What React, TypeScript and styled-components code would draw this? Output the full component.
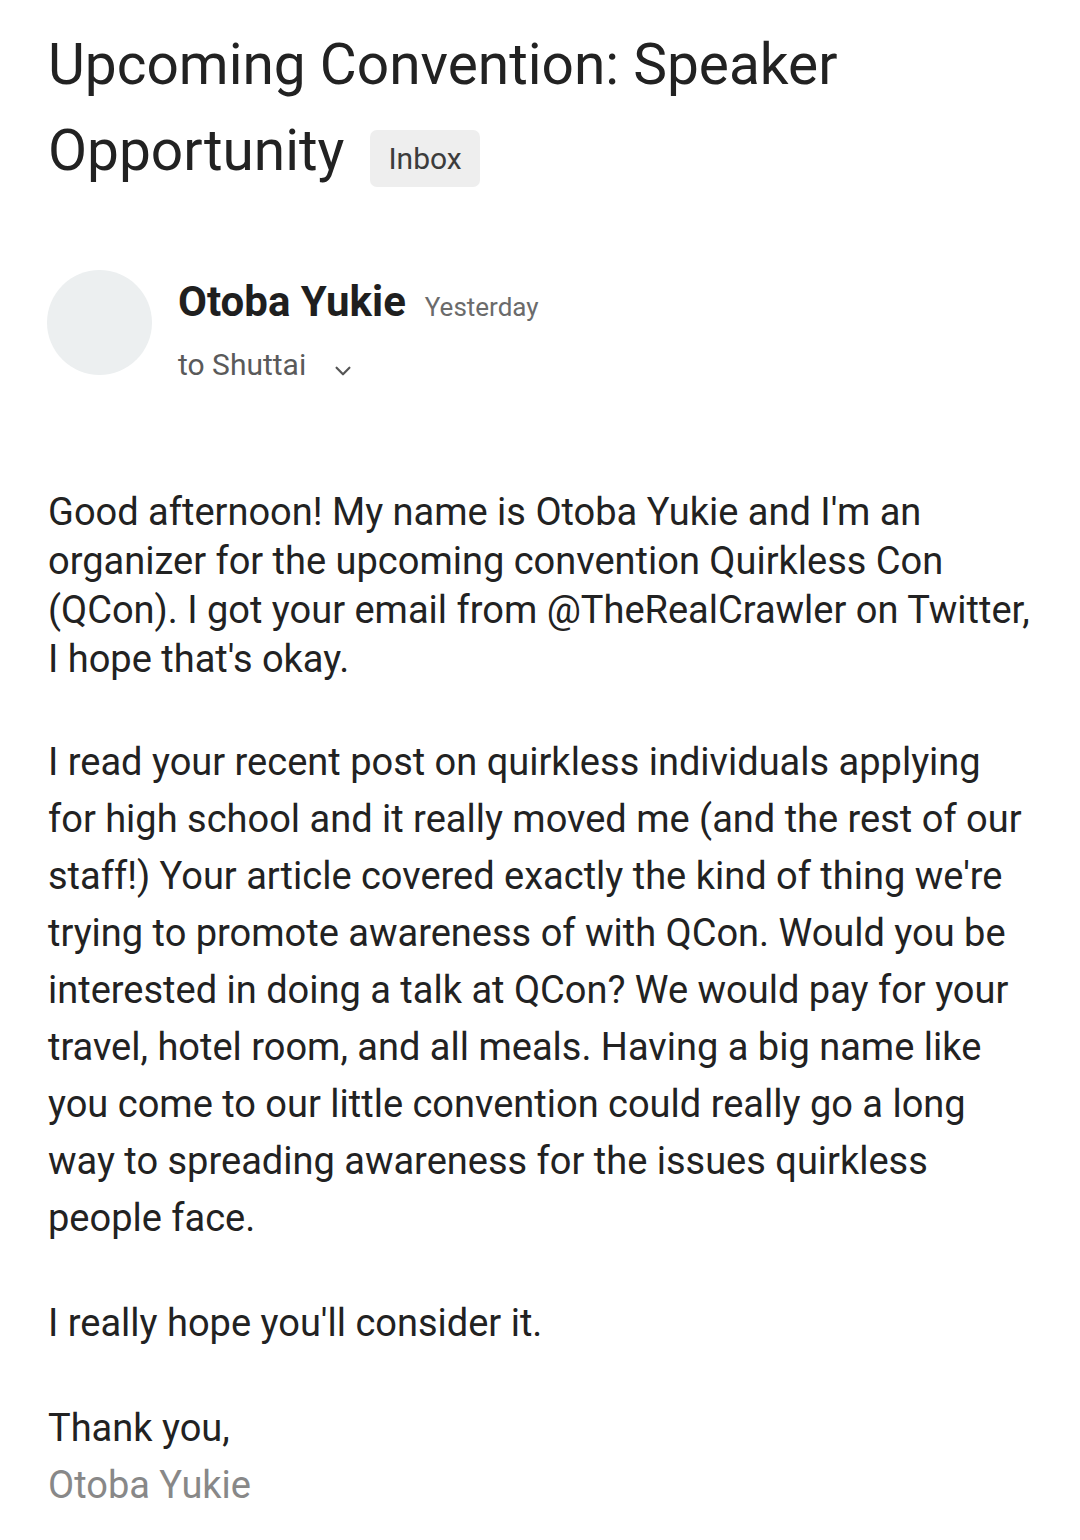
import React from "react";
import styled, { createGlobalStyle } from "styled-components";

const Global = createGlobalStyle`
  html, body { margin: 0; padding: 0; background: #ffffff; }
  body { font-family: Roboto, "Noto Sans", Arial, sans-serif; color: #212121; }
`;

const Page = styled.div`
  width: 1080px;
  box-sizing: border-box;
  padding: 22px 20px 0 48px;
`;

const Title = styled.h1`
  margin: 0;
  font-weight: 400;
  font-size: 56.8px;
  line-height: 86px;
  color: #222222;
`;

const Badge = styled.span`
  display: inline-block;
  vertical-align: 1px;
  margin-left: 26px;
  padding: 0 18px;
  height: 57px;
  line-height: 57px;
  border-radius: 7px;
  background: #eeeeee;
  font-size: 30px;
  color: #3c3c3c;
`;

const Header = styled.div`
  display: flex;
  align-items: center;
  gap: 26px;
  margin-top: 69px;
  margin-left: -1px;
`;

const Avatar = styled.div`
  width: 105px;
  height: 105px;
  border-radius: 50%;
  background: #eceff0;
  flex: none;
`;

const Meta = styled.div`
  display: flex;
  flex-direction: column;
  padding-top: 14px;
`;

const NameRow = styled.div`
  display: flex;
  align-items: baseline;
  gap: 19px;
`;

const Name = styled.span`
  font-weight: 700;
  font-size: 42px;
  color: #1f1f1f;
`;

const When = styled.span`
  font-size: 26px;
  color: #6b6b6b;
`;

const ToRow = styled.div`
  display: flex;
  align-items: center;
  gap: 26px;
  margin-top: 20px;
  font-size: 30px;
  color: #5a5a5a;
`;

const Chevron = styled.svg`
  margin-top: 14px;
`;

const Body = styled.div`
  margin-top: 106px;
  font-size: 38px;
  color: #222222;
`;

const Para = styled.p<{ $lh: number; $gap: number }>`
  margin: 0 0 ${(p) => p.$gap}px 0;
  line-height: ${(p) => p.$lh}px;
  white-space: nowrap;
`;

const Signature = styled.div`
  color: #888888;
  line-height: 57px;
`;

export default function App() {
  return (
    <Page>
      <Global />
      <Title>
        Upcoming Convention: Speaker
        <br />
        Opportunity<Badge>Inbox</Badge>
      </Title>
      <Header>
        <Avatar />
        <Meta>
          <NameRow>
            <Name>Otoba Yukie</Name>
            <When>Yesterday</When>
          </NameRow>
          <ToRow>
            <span>to Shuttai</span>
            <Chevron width="22" height="22" viewBox="0 0 24 24">
              <path d="M5 8.5l7 7 7-7" fill="none" stroke="#555" strokeWidth="2.4" strokeLinecap="round" strokeLinejoin="round" />
            </Chevron>
          </ToRow>
        </Meta>
      </Header>
      <Body>
        <Para $lh={49} $gap={50}>
          Good afternoon! My name is Otoba Yukie and I'm an
          <br />
          organizer for the upcoming convention Quirkless Con
          <br />
          (QCon). I got your email from @TheRealCrawler on Twitter,
          <br />
          I hope that's okay.
        </Para>
        <Para $lh={57} $gap={48}>
          I read your recent post on quirkless individuals applying
          <br />
          for high school and it really moved me (and the rest of our
          <br />
          staff!) Your article covered exactly the kind of thing we're
          <br />
          trying to promote awareness of with QCon. Would you be
          <br />
          interested in doing a talk at QCon? We would pay for your
          <br />
          travel, hotel room, and all meals. Having a big name like
          <br />
          you come to our little convention could really go a long
          <br />
          way to spreading awareness for the issues quirkless
          <br />
          people face.
        </Para>
        <Para $lh={57} $gap={48}>
          I really hope you'll consider it.
        </Para>
        <Para $lh={57} $gap={0}>
          Thank you,
        </Para>
        <Signature>Otoba Yukie</Signature>
      </Body>
    </Page>
  );
}
